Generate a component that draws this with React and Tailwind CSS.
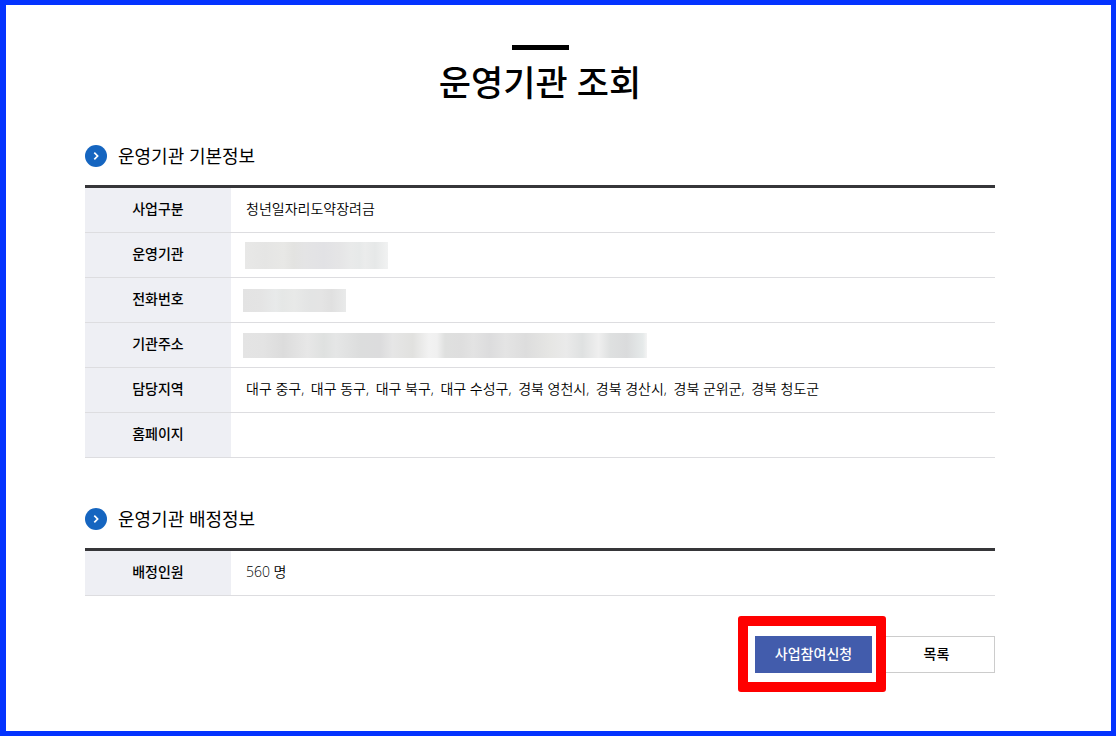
import React from 'react';

const regions = ['대구 중구', '대구 동구', '대구 북구', '대구 수성구', '경북 영천시', '경북 경산시', '경북 군위군', '경북 청도군'];

const basicRows = [
  { label: '사업구분', value: '청년일자리도약장려금' },
  { label: '운영기관', mask: <MaskName /> },
  { label: '전화번호', mask: <MaskPhone /> },
  { label: '기관주소', mask: <MaskAddress /> },
  { label: '담당지역', value: <RegionList /> },
  { label: '홈페이지', value: '' }
];

const quotaRows = [{ label: '배정인원', value: '560 명' }];

export default function App() {
  return (
    <div className="min-h-screen bg-white border-[5px] border-l-[6px] border-[#0433ff] text-black font-['Open_Sans','Noto_Sans_CJK_KR',sans-serif]">
      <main className="pt-10 pb-14 pl-[79px] pr-[116px]">
        <div className="mx-auto w-[57px] h-[5px] bg-black" />
        <h1 className="mt-2 text-center text-[35px] leading-[50px] font-medium">운영기관 조회</h1>

        <section className="mt-[34px]">
          <SectionTitle>운영기관 기본정보</SectionTitle>
          <InfoTable rows={basicRows} />
        </section>

        <section className="mt-[47px]">
          <SectionTitle>운영기관 배정정보</SectionTitle>
          <InfoTable rows={quotaRows} />
        </section>

        <div className="mt-10 flex justify-end gap-[6px]">
          <div className="relative">
            <button type="button" className="block w-[117px] h-[37px] pb-[2px] bg-[#425cac] text-sm font-medium text-white">
              사업참여신청
            </button>
            <span className="absolute -top-5 -left-[17px] w-[148px] h-[76px] rounded-[3px] border-[10px] border-[#ff0000] pointer-events-none" />
          </div>
          <button type="button" className="w-[117px] h-[37px] pb-[2px] border border-[#cccccc] bg-white text-sm font-medium">
            목록
          </button>
        </div>
      </main>
    </div>
  );
}

function SectionTitle({ children }) {
  return (
    <h2 className="flex items-center gap-[11px] h-7 text-[18px] leading-7">
      <svg width="22" height="22" viewBox="0 0 22 22" aria-hidden="true">
        <circle cx="11" cy="11" r="11" fill="#1565c0" />
        <path d="M9.3 7.7 L12.6 11 L9.3 14.3" fill="none" stroke="#fff" strokeWidth="1.7" />
      </svg>
      {children}
    </h2>
  );
}

function InfoTable({ rows }) {
  return (
    <table className="mt-[15px] w-full table-fixed border-separate border-spacing-0 border-t-[3px] border-[#363639] text-sm">
      <tbody>
        {rows.map((row) => (
          <tr key={row.label}>
            <th scope="row" className="w-[146px] h-[45px] border-b border-[#dddde0] bg-[#eeeff4] p-0 pb-[2px] text-center font-medium">
              {row.label}
            </th>
            {row.mask ? (
              <td className="border-b border-[#dddde0] py-0 px-3">{row.mask}</td>
            ) : (
              <td className="border-b border-[#dddde0] p-0 pb-[2px] pl-[15px] font-[350]">{row.value}</td>
            )}
          </tr>
        ))}
      </tbody>
    </table>
  );
}

function RegionList() {
  return regions.map((region, i) => (
    <React.Fragment key={region}>
      <span className="mr-[3px]">{i < regions.length - 1 ? `${region},` : region}</span>{' '}
    </React.Fragment>
  ));
}

function MaskName() {
  return (
    <div className="ml-[2px] w-[143px] h-[27px] bg-[linear-gradient(90deg,#e8e8e7,#e5e5e4_14%,#e8e8e6_27%,#e3e3e1_34%,#e4e4e5_42%,#e2e2e5_55%,#e5e5e6_66%,#e9eaea_74%,#e7e9e9_80%,#ebecec_84%,#e6e8e8_91%,#f1f2f2)]" />
  );
}

function MaskPhone() {
  return (
    <div className="w-[103px] h-[23px] bg-[linear-gradient(90deg,#e3e3e3,#e4e4e4_17%,#e8eaea_32%,#e5e7e6_38%,#e8e9e8_50%,#e3e4e4_65%,#e4e4e4_76%,#e0e0e0_86%,#e9eaea)]" />
  );
}

function MaskAddress() {
  return (
    <div className="w-[404px] h-[25px] bg-[linear-gradient(90deg,#e4e4e4,#e3e3e3_5%,#dcdcdc_10%,#e7e7e7_16%,#dfe1e0_20%,#e5e6e6_23%,#dcdddd_29%,#dcdcdd_34%,#e6e6e6_37%,#e1e1df_42%,#f2f2f2_46%,#f0f0f0_48%,#dfe0df_50%,#dedede_54%,#e3e3e3_57%,#dcdcdd_61%,#e4e4e4_65%,#dddddd_70%,#e6e6e4_76%,#eaeaea_80%,#dfe1e1_84%,#efefef_88%,#dee0e0_91%,#dadbdc_95%,#e6eaea_99%,#f4f4f4)]" />
  );
}
